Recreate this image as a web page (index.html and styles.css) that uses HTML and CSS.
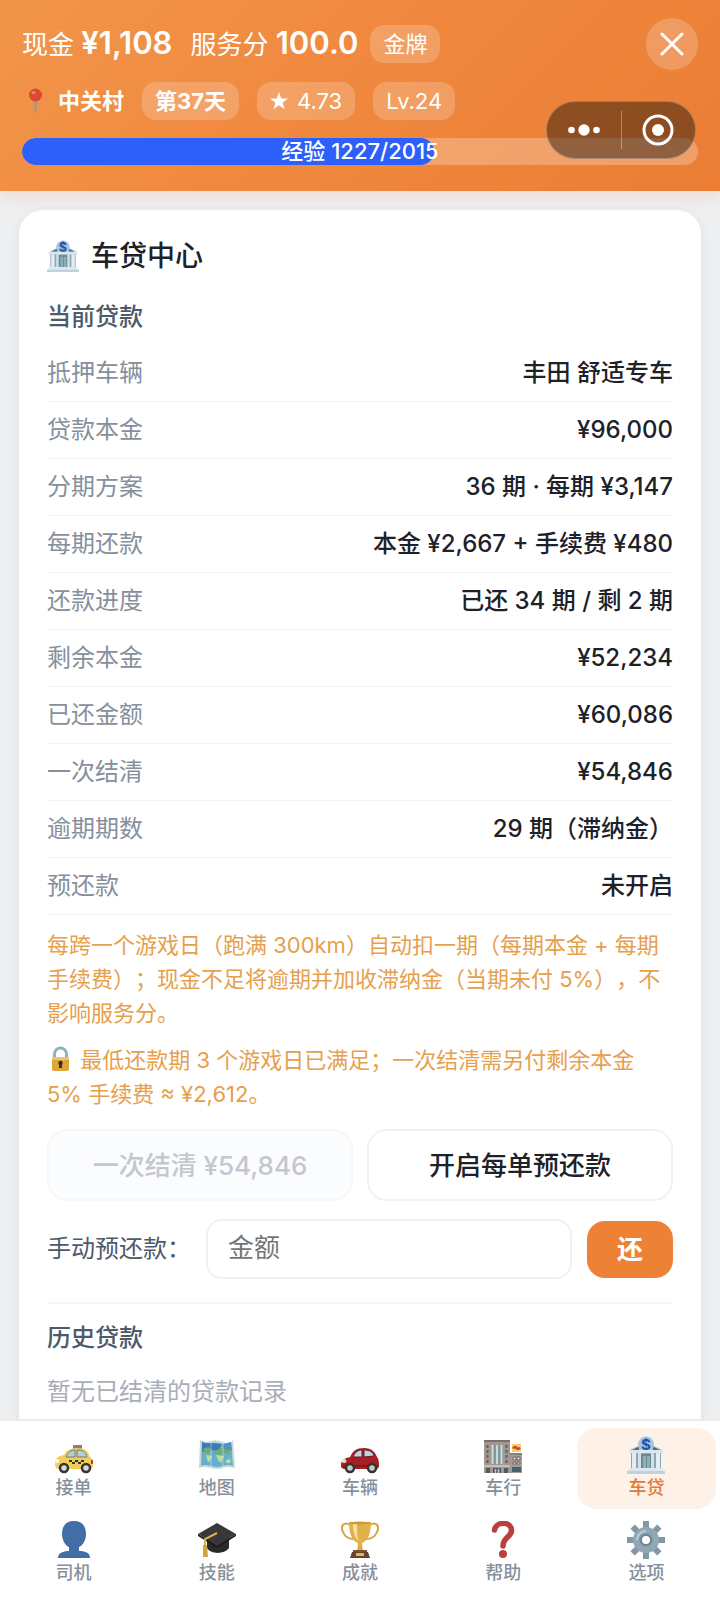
FILE: index.html
```html
<!DOCTYPE html>
<html lang="zh-CN">
<head>
    <meta charset="UTF-8">
    <meta name="viewport" content="width=device-width, initial-scale=1.0">
    <title>车贷中心</title>
    <link rel="stylesheet" href="styles.css">
</head>
<body>
    <!-- Header -->
    <header class="header">
        <div class="stats">
            <span class="stat">现金 <strong>¥1,108</strong></span>
            <span class="stat">服务分 <strong>100.0</strong></span>
            <span class="chip rank">金牌</span>
            <button class="close" type="button" aria-label="关闭">
                <svg width="24" height="24" viewBox="0 0 24 24"><path d="M2 2 L22 22 M22 2 L2 22" stroke="#fff" stroke-width="3" stroke-linecap="round"/></svg>
            </button>
        </div>
        <div class="info">
            <span class="place">
                <svg width="26" height="26" viewBox="0 0 26 26">
                    <path d="M12 11 H15 L14.500 24 L13.500 26 L12.500 24 Z" fill="#a99587"/>
                    <circle cx="13.500" cy="7" r="6.500" fill="#dc4a35"/>
                    <ellipse cx="11.500" cy="4.500" rx="2" ry="1.500" fill="#ef8573"/>
                </svg>
                <b>中关村</b>
            </span>
            <span class="chip"><b>第37天</b></span>
            <span class="chip star">
                <svg width="18" height="18" viewBox="0 0 18 18"><path d="M9 0 L11.200 6.400 L18 6.600 L12.600 10.700 L14.600 17.200 L9 13.300 L3.400 17.200 L5.400 10.700 L0 6.600 L6.800 6.400 Z" fill="#fff"/></svg>
                4.73
            </span>
            <span class="chip">Lv.24</span>
        </div>
        <div class="progress">
            <div class="progress-fill" style="width: 61%"></div>
            <span class="progress-text">经验 1227/2015</span>
        </div>
        <div class="capsule">
            <button type="button" aria-label="更多">
                <svg width="32" height="14" viewBox="0 0 32 14" fill="#fff"><circle cx="3.500" cy="7" r="3.300"/><circle cx="16" cy="7" r="5.700"/><circle cx="28.500" cy="7" r="3.300"/></svg>
            </button>
            <button type="button" aria-label="退出">
                <svg width="32" height="32" viewBox="0 0 32 32"><circle cx="16" cy="16" r="14" fill="none" stroke="#fff" stroke-width="3"/><circle cx="16" cy="16" r="6" fill="#fff"/></svg>
            </button>
        </div>
    </header>

    <main class="content">
        <section class="card">
            <h1 class="card-title">
                <svg width="32" height="32" viewBox="0 0 38 38">
                    <path d="M2 14 L13 9 L19 3 L25 9 L36 14 Z" fill="#b4cbdc"/>
                    <path d="M5 14 L12 10.500 L12 14 Z M33 14 L26 10.500 L26 14 Z" fill="#52697a"/>
                    <circle cx="19" cy="8.500" r="8" fill="#a5c6e2"/>
                    <text x="19" y="14" text-anchor="middle" class="bank-sign">$</text>
                    <rect x="2" y="14" width="34" height="3" fill="#dbe7ef"/>
                    <rect x="4" y="17" width="30" height="16" fill="#8fa6b5"/>
                    <rect x="5" y="17" width="4" height="16" fill="#e3edf4"/>
                    <rect x="11" y="17" width="3" height="16" fill="#d3e0ea"/>
                    <rect x="24" y="17" width="3" height="16" fill="#d3e0ea"/>
                    <rect x="29" y="17" width="4" height="16" fill="#e3edf4"/>
                    <rect x="14" y="18" width="10" height="15" fill="#6f8794"/>
                    <rect x="16" y="20" width="3" height="13" fill="#86b3b4"/>
                    <rect x="20" y="20" width="3" height="13" fill="#86b3b4"/>
                    <rect x="2" y="32" width="34" height="3" fill="#dce8f1"/>
                    <rect x="0" y="35" width="38" height="3" fill="#bfd1df"/>
                </svg>
                车贷中心
            </h1>

            <h2 class="sub-title">当前贷款</h2>
            <dl class="rows">
                <div class="row"><dt>抵押车辆</dt><dd>丰田 舒适专车</dd></div>
                <div class="row"><dt>贷款本金</dt><dd>¥96,000</dd></div>
                <div class="row"><dt>分期方案</dt><dd>36 期 · 每期 ¥3,147</dd></div>
                <div class="row"><dt>每期还款</dt><dd>本金 ¥2,667 + 手续费 ¥480</dd></div>
                <div class="row"><dt>还款进度</dt><dd>已还 34 期 / 剩 2 期</dd></div>
                <div class="row"><dt>剩余本金</dt><dd>¥52,234</dd></div>
                <div class="row"><dt>已还金额</dt><dd>¥60,086</dd></div>
                <div class="row"><dt>一次结清</dt><dd>¥54,846</dd></div>
                <div class="row"><dt>逾期期数</dt><dd>29 期（滞纳金）</dd></div>
                <div class="row"><dt>预还款</dt><dd>未开启</dd></div>
            </dl>

            <p class="hint">每跨一个游戏日（跑满 300km）自动扣一期（每期本金 + 每期手续费）；现金不足将逾期并加收滞纳金（当期未付 5%），不影响服务分。</p>
            <p class="hint">
                <svg width="27" height="26" viewBox="0 0 27 26">
                    <path d="M7.500 13 V8 A6 6 0 0 1 19.500 8 V13" fill="none" stroke="#8fb0bf" stroke-width="3"/>
                    <rect x="5" y="11" width="17" height="14" rx="2" fill="#dca63a"/>
                    <rect x="5" y="11" width="17" height="3" rx="1" fill="#edc765"/>
                    <circle cx="13.500" cy="17" r="2.200" fill="#3d2a1a"/>
                    <path d="M12.500 17 H14.500 L15 22 H12 Z" fill="#3d2a1a"/>
                </svg>
                最低还款期 3 个游戏日已满足；一次结清需另付剩余本金 5% 手续费 ≈ ¥2,612。
            </p>

            <div class="actions">
                <button class="btn" type="button" disabled>一次结清 ¥54,846</button>
                <button class="btn" type="button">开启每单预还款</button>
            </div>

            <div class="prepay">
                <label for="amount">手动预还款：</label>
                <input id="amount" type="text" inputmode="numeric" placeholder="金额">
                <button class="btn-pay" type="button">还</button>
            </div>

            <div class="history">
                <h2 class="sub-title">历史贷款</h2>
                <p class="empty">暂无已结清的贷款记录</p>
            </div>
        </section>
    </main>

    <!-- Bottom Navigation -->
    <nav class="bottom-nav">
        <a class="nav-item" href="#orders">
            <svg width="38" height="38" viewBox="0 1 38 38">
                <rect x="18" y="10" width="9" height="4" fill="#85817b"/>
                <path d="M0 27 C0 22 5 21 9 20 C12 15 16 13 22 13 C30 13 33 16 35 22 C38 23 38 27 38 32 L36 34 H3 C0 33 0 30 0 27 Z" fill="#f0ce57"/>
                <path d="M11 22 C13 17 16 15 20 15 V22 Z M22 15 C28 15 31 17 32 22 L22 22 Z" fill="#a9d3e4" stroke="#7d7b62"/>
                <path d="M14 25 h3 v2 h3 v-2 h3 v2 h3 v-2 h3 v2 h-3 v2 h-3 v-2 h-3 v2 h-3 v-2 h-3 Z" fill="#333"/>
                <rect x="0" y="24" width="4" height="4" rx="1" fill="#fff6d5"/>
                <rect x="36" y="25" width="2" height="4" fill="#d2352b"/>
                <circle cx="9" cy="33" r="4" fill="#d9d9d9" stroke="#333" stroke-width="2.500"/>
                <circle cx="31" cy="33" r="4" fill="#d9d9d9" stroke="#333" stroke-width="2.500"/>
            </svg>
            <span>接单</span>
        </a>
        <a class="nav-item" href="#map">
            <svg width="38" height="38" viewBox="0 0 38 38">
                <path d="M2 4 Q8 7 13 5 T25 6 T35 4 L37 32 Q30 30 25 32 T13 32 T1 32 Z" fill="#c6d8dc"/>
                <path d="M4 6 Q8 8 13 7 T25 8 T33 6 L35 30 Q30 28 25 30 T13 30 T3 30 Z" fill="#67afcb"/>
                <path d="M4 6 Q8 8 13 7 L24 8 L20 15 L13 14 L4 16 Z" fill="#3e7ab8"/>
                <path d="M25 8 L33 6 L34 15 L25 13 Z" fill="#4f93c4"/>
                <path d="M5 13 L10 11 L14 14 L11 18 L6 17 Z M17 15 L24 12 L29 14 L33 14 L31 18 L27 17 L22 19 L16 18 Z" fill="#6fae6a"/>
                <path d="M8 19 L14 20 L12 25 L10 26 Z M18 19 L26 20 L23 27 L20 24 Z M28 24 L33 23 L32 27 L28 27 Z" fill="#b9dfa0"/>
                <path d="M13 6 V31 M25 7 V31" stroke="#fff" opacity=".4"/>
            </svg>
            <span>地图</span>
        </a>
        <a class="nav-item" href="#cars">
            <svg width="38" height="38" viewBox="0 1 38 38">
                <path d="M0 30 C0 24 5 23 9 22 C12 16 15 13 23 13 C31 13 34 17 36 22 C38 24 38 28 38 32 L36 34 H3 C0 33 0 32 0 30 Z" fill="#a51f25"/>
                <path d="M12 22 C14 17 17 15 21 15 V22 Z M23 15 C29 15 32 17 33 21 L23 22 Z" fill="#b7d6e8" stroke="#6f1a1e"/>
                <ellipse cx="3" cy="26" rx="2.500" ry="2" fill="#f2dcc9"/>
                <path d="M2 31 H36" stroke="#7b1519" stroke-width="1.500"/>
                <circle cx="9" cy="33" r="4" fill="#c9c9c9" stroke="#333" stroke-width="2.500"/>
                <circle cx="31" cy="33" r="4" fill="#c9c9c9" stroke="#333" stroke-width="2.500"/>
            </svg>
            <span>车辆</span>
        </a>
        <a class="nav-item" href="#dealer">
            <svg width="38" height="38" viewBox="0 0 38 38">
                <rect x="0" y="4" width="26" height="33" fill="#a3958f"/>
                <rect x="0" y="4" width="26" height="2" fill="#7c706c"/>
                <rect x="7" y="9" width="12" height="19" fill="#8a9598"/>
                <path d="M8.500 9 V28 M13 9 V28 M17.500 9 V28" stroke="#c3dde0" stroke-width="2"/>
                <path d="M3.500 9 V29 M22.500 9 V29" stroke="#65605f" stroke-width="2" stroke-dasharray="3 2"/>
                <rect x="0" y="29" width="26" height="2" fill="#c9bdb6"/>
                <path d="M2 37 V32 H6 V37 Z M9 37 V32 H17 V37 Z M20 37 V32 H24 V37 Z" fill="#4f5c62"/>
                <path d="M11.500 33 V37 M14.500 33 V37" stroke="#b5cdd2" stroke-width="1.500"/>
                <rect x="28" y="8" width="9" height="8" fill="#f3d070"/>
                <path d="M29 12.500 Q31 10 32.500 12 T36 11.500" stroke="#d0412f" stroke-width="2.500" fill="none"/>
                <rect x="26" y="18" width="12" height="19" fill="#a79a95"/>
                <rect x="26" y="17" width="12" height="2" fill="#8b7f7a"/>
                <path d="M29 21 h3 v3 h-3 Z M33 21 h3 v3 h-3 Z M29 26 h3 v2 h-3 Z M33 26 h3 v2 h-3 Z" fill="#dde4e4" stroke="#6c6866"/>
                <rect x="28" y="31" width="9" height="5" fill="#46606d"/>
            </svg>
            <span>车行</span>
        </a>
        <a class="nav-item active" href="#loan">
            <svg width="38" height="38" viewBox="0 0 38 38">
                <path d="M2 14 L13 9 L19 3 L25 9 L36 14 Z" fill="#b4cbdc"/>
                <path d="M5 14 L12 10.500 L12 14 Z M33 14 L26 10.500 L26 14 Z" fill="#52697a"/>
                <circle cx="19" cy="8.500" r="8" fill="#a5c6e2"/>
                <text x="19" y="14" text-anchor="middle" class="bank-sign">$</text>
                <rect x="2" y="14" width="34" height="3" fill="#dbe7ef"/>
                <rect x="4" y="17" width="30" height="16" fill="#8fa6b5"/>
                <rect x="5" y="17" width="4" height="16" fill="#e3edf4"/>
                <rect x="11" y="17" width="3" height="16" fill="#d3e0ea"/>
                <rect x="24" y="17" width="3" height="16" fill="#d3e0ea"/>
                <rect x="29" y="17" width="4" height="16" fill="#e3edf4"/>
                <rect x="14" y="18" width="10" height="15" fill="#6f8794"/>
                <rect x="16" y="20" width="3" height="13" fill="#86b3b4"/>
                <rect x="20" y="20" width="3" height="13" fill="#86b3b4"/>
                <rect x="2" y="32" width="34" height="3" fill="#dce8f1"/>
                <rect x="0" y="35" width="38" height="3" fill="#bfd1df"/>
            </svg>
            <span>车贷</span>
        </a>
        <a class="nav-item" href="#driver">
            <svg width="38" height="38" viewBox="0 0 38 38">
                <path d="M19 0 C27 0 31 5 31 13 C31 21 26 27 19 28 C12 27 7 21 7 13 C7 5 11 0 19 0 Z M14 24 H24 V30 C31 30 35 32 35 37 H3 C3 32 8 30 14 30 Z" fill="#426da5"/>
            </svg>
            <span>司机</span>
        </a>
        <a class="nav-item" href="#skills">
            <svg width="38" height="38" viewBox="0 0 38 38">
                <path d="M9 18 V27 C12 33 26 34 31 27 V16 Z" fill="#2a2a2b"/>
                <path d="M19 2 L38 13 L19 25 L0 13 Z" fill="#38383a"/>
                <path d="M0 13 L19 25 L38 13 V15 L19 27 L0 15 Z" fill="#1c1c1d"/>
                <path d="M19 12 L7 18 V26" fill="none" stroke="#d9b44a" stroke-width="2"/>
                <path d="M5 24 H9 L10 36 H5 Z" fill="#cfa63d"/>
            </svg>
            <span>技能</span>
        </a>
        <a class="nav-item" href="#awards">
            <svg width="38" height="38" viewBox="0 0 38 38">
                <path d="M9 4 C3 0 -1 5 2 11 C4 16 9 18 13 18 M29 4 C35 0 39 5 36 11 C34 16 29 18 25 18" fill="none" stroke="#d2a442" stroke-width="2"/>
                <path d="M8 1 H30 C30 12 27 20 21 22 L22 30 H16 L17 22 C11 20 8 12 8 1 Z" fill="#e0b04a"/>
                <path d="M12 3 H16 C16 11 16 16 18 20 C13 16 12 10 12 3 Z" fill="#f8e2a0"/>
                <ellipse cx="19" cy="2" rx="11" ry="1.500" fill="#c99b3b"/>
                <path d="M12 29 H26 V31 H12 Z" fill="#7c5336"/>
                <path d="M11 31 H27 L29 37 H9 Z" fill="#65432f"/>
                <rect x="15" y="32" width="8" height="3" fill="#e0b851"/>
            </svg>
            <span>成就</span>
        </a>
        <a class="nav-item" href="#help">
            <svg width="38" height="38" viewBox="0 0 38 38">
                <path d="M10.500 9 C12 0 27.500 0 27.500 9.500 C27.500 16 19 16 19 25" fill="none" stroke="#bb3f3c" stroke-width="5.500" stroke-linecap="round"/>
                <circle cx="19" cy="33" r="4" fill="#bb3f3c"/>
            </svg>
            <span>帮助</span>
        </a>
        <a class="nav-item" href="#options">
            <svg width="38" height="38" viewBox="0 0 38 38">
                <g stroke="#8199a5" stroke-width="6">
                    <path d="M19 0 V38 M0 19 H38 M5.600 5.600 L32.400 32.400 M32.400 5.600 L5.600 32.400"/>
                </g>
                <circle cx="19" cy="19" r="13" fill="#8fa8b4"/>
                <path d="M10 19 A9 9 0 0 1 19 10" fill="none" stroke="#bcd0d9" stroke-width="2"/>
                <circle cx="19" cy="19" r="6.500" fill="#6f8792"/>
                <circle cx="19" cy="19" r="4" fill="#fff"/>
            </svg>
            <span>选项</span>
        </a>
    </nav>
</body>
</html>
```
FILE: styles.css
```css
/* General Styles */
* {
    box-sizing: border-box;
}

body {
    margin: 0;
    height: 100vh;
    display: flex;
    flex-direction: column;
    font-family: Inter, "Noto Sans CJK SC", sans-serif;
    font-size: 24px;
    line-height: 36px;
    text-spacing-trim: space-all;
    color: #1d2129;
    background: #eeeff1;
}

h1, h2, p, dl, dd {
    margin: 0;
}

button, input {
    font-family: inherit;
}

button {
    border: none;
    padding: 0;
    cursor: pointer;
}

svg {
    display: block;
    flex: none;
}

.bank-sign {
    font-size: 15px;
    font-weight: 700;
    fill: #2350a8;
}

/* Header */
.header {
    position: relative;
    z-index: 1;
    padding: 18px 22px 26px;
    color: #fff;
    background: linear-gradient(135deg, #f1954a 0%, #f0893f 45%, #eb7d35 100%);
    box-shadow: 0 4px 16px rgba(236, 128, 53, 0.2);
}

.stats {
    display: flex;
    align-items: center;
    gap: 18px;
    height: 52px;
    font-size: 26px;
}

.stat strong {
    font-size: 31px;
    font-weight: 600;
}

.chip {
    display: flex;
    align-items: center;
    gap: 9px;
    height: 38px;
    padding: 0 13px;
    border-radius: 14px;
    background: rgba(255, 255, 255, 0.2);
    font-size: 22px;
}

.rank {
    margin-left: -6px;
}

.close {
    display: flex;
    align-items: center;
    justify-content: center;
    width: 52px;
    height: 52px;
    margin-left: auto;
    border-radius: 50%;
    background: rgba(255, 255, 255, 0.2);
}

.info {
    display: flex;
    align-items: center;
    gap: 18px;
    margin-top: 12px;
    font-size: 22px;
}

.place {
    display: flex;
    align-items: center;
    gap: 10px;
}

.progress {
    display: flex;
    position: relative;
    height: 27px;
    margin-top: 18px;
    border-radius: 14px;
    overflow: hidden;
    background: rgba(255, 255, 255, 0.25);
}

.progress-fill {
    border-radius: 14px;
    background: #2d5ffb;
}

.progress-text {
    position: absolute;
    inset: 0;
    text-align: center;
    font-size: 22px;
    font-weight: 500;
    line-height: 27px;
}

.capsule {
    position: absolute;
    top: 101px;
    right: 24px;
    display: flex;
    width: 150px;
    height: 58px;
    border: 1px solid rgba(255, 255, 255, 0.25);
    border-radius: 29px;
    background: rgba(0, 0, 0, 0.4);
}

.capsule button {
    display: flex;
    flex: 1;
    align-items: center;
    justify-content: center;
    background: none;
}

.capsule button + button {
    border-left: 1px solid rgba(255, 255, 255, 0.35);
    margin: 9px 0;
}

/* Card */
.content {
    flex: 1;
    min-height: 0;
    overflow-y: auto;
    scrollbar-width: none;
    padding: 19px 19px 24px;
}

.card {
    padding: 28px;
    border-radius: 24px;
    background: #fff;
    box-shadow: 0 2px 12px rgba(0, 0, 0, 0.06);
}

.card-title {
    display: flex;
    align-items: center;
    gap: 12px;
    margin-bottom: 25px;
    font-size: 28px;
    font-weight: 500;
}

.sub-title {
    font-size: 24px;
    font-weight: 500;
    color: #4e5969;
}

.rows {
    margin-top: 10px;
}

.row {
    display: flex;
    justify-content: space-between;
    padding: 10px 0;
    border-bottom: 1px solid #f2f3f5;
}

.row dt {
    color: #86909c;
}

.row dd {
    font-weight: 500;
}

.hint {
    margin-top: 13px;
    font-size: 22px;
    line-height: 34px;
    color: #e6a04c;
}

.hint svg {
    display: inline-block;
    vertical-align: -4px;
}

.actions {
    display: flex;
    gap: 14px;
    margin-top: 18px;
}

.btn {
    flex: 1;
    height: 72px;
    padding-bottom: 4px;
    border: 2px solid #f0f1f3;
    border-radius: 20px;
    background: #fff;
    color: #1d2129;
    font-size: 26px;
    font-weight: 500;
}

.btn:disabled {
    border-color: #f6f7f9;
    background: #fbfcfe;
    color: #c4c8ce;
}

.prepay {
    display: flex;
    align-items: center;
    gap: 15px;
    margin-top: 18px;
    color: #4e5969;
}

.prepay input {
    flex: 1;
    min-width: 0;
    height: 60px;
    padding: 0 20px 4px;
    border: 2px solid #f0f1f3;
    border-radius: 16px;
    font-size: 26px;
}

.prepay input::placeholder {
    color: #757575;
}

.btn-pay {
    width: 86px;
    height: 57px;
    padding-bottom: 4px;
    border-radius: 18px;
    background: #ed8136;
    color: #fff;
    font-size: 26px;
    font-weight: 600;
}

.history {
    margin-top: 23px;
    padding-top: 16px;
    border-top: 2px solid #f4f5f6;
}

.empty {
    margin-top: 18px;
    color: #a9aeb8;
}

/* Bottom Navigation */
.bottom-nav {
    display: grid;
    grid-template-columns: repeat(5, 1fr);
    gap: 4px;
    padding: 7px 4px 6px;
    border-top: 2px solid #ebecee;
    background: #fff;
}

.nav-item {
    display: flex;
    flex-direction: column;
    align-items: center;
    gap: 3px;
    height: 81px;
    padding-top: 8px;
    border-radius: 20px;
    color: #86909c;
    font-size: 18px;
    font-weight: 500;
    line-height: 22px;
    text-decoration: none;
}

.nav-item.active {
    background: #fdf1e8;
    color: #e37a34;
}
```
